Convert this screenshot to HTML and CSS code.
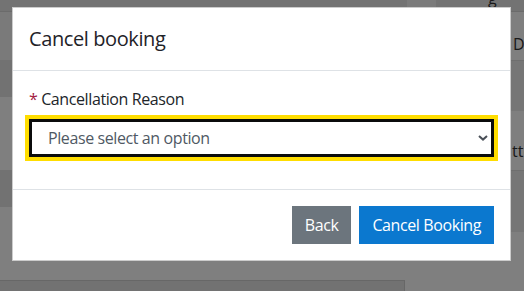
FILE: index.html
```html
<!DOCTYPE html>
<html lang="en">
<head>
    <meta charset="UTF-8">
    <meta name="viewport" content="width=device-width, initial-scale=1.0">
    <title>Cancel booking</title>
    <link rel="stylesheet" href="styles.css">
</head>
<body>
    <div class="page">
        <div class="page-left">
            <div class="row row-top"></div>
            <div class="row row-a"></div>
            <div class="row row-b"></div>
            <div class="row row-c"></div>
            <div class="row row-b"></div>
            <div class="row row-d"></div>
            <div class="bottom-panel"></div>
        </div>
        <div class="page-mid">
            <div class="row row-top cell-light"></div>
        </div>
        <div class="page-right">
            <div class="row row-top"><span class="tail">g</span></div>
            <div class="row row-e"><span class="cell-text">D</span></div>
            <div class="row row-f"></div>
            <div class="row row-g"><span class="cell-text">tte</span></div>
            <div class="row row-h"></div>
            <div class="row row-i"></div>
        </div>
    </div>

    <div class="backdrop"></div>

    <div class="modal">
        <div class="modal-header">
            <h5 class="modal-title">Cancel booking</h5>
        </div>
        <div class="modal-body">
            <div class="form-group">
                <label class="form-label" for="reason"><span class="required">*</span> Cancellation Reason</label>
                <div class="select-wrap">
                    <select class="form-control" id="reason">
                        <option>Please select an option</option>
                        <option>Change of plans</option>
                        <option>Booked by mistake</option>
                        <option>Other</option>
                    </select>
                    <svg class="chevron" width="10" height="6" viewBox="0 0 10 6">
                        <path d="M1 1 L5 4.6 L9 1" fill="none" stroke="#4a5058" stroke-width="2"/>
                    </svg>
                </div>
            </div>
        </div>
        <div class="modal-footer">
            <button class="btn btn-secondary">Back</button>
            <button class="btn btn-primary">Cancel Booking</button>
        </div>
    </div>
</body>
</html>
```

FILE: styles.css
```css
body {
    margin: 0;
    font-family: "Segoe UI", "Open Sans", "Noto Sans", sans-serif;
    font-size: 16px;
    line-height: 1.5;
    letter-spacing: -0.4px;
    color: #212529;
    overflow: hidden;
}

/* page behind the dialog */
.page {
    display: flex;
    height: 291px;
    background: #fff;
}
.page-left {
    width: 407px;
    display: flex;
    flex-direction: column;
}
.page-mid {
    width: 29px;
}
.page-right {
    flex: 1;
    display: flex;
    flex-direction: column;
}
.row {
    position: relative;
    overflow: hidden;
}
.row-top {
    height: 11px;
    background: #e6e6e6;
    border-bottom: 1px solid #d6d6d6;
}
.cell-light {
    background: #f6f6f6;
}
.row-a { height: 48px; background: #f4f4f4; }
.row-b { height: 37px; background: #e4e4e4; }
.row-c { height: 73px; background: #fff; }
.row-d { height: 73px; background: #fff; }
.bottom-panel {
    margin-top: auto;
    height: 10px;
    margin-right: 2px;
    background: #e4e4e4;
    border-top: 1px solid #cfcfcf;
    border-right: 1px solid #cfcfcf;
}
.row-e { height: 48px; background: #fff; border-bottom: 1px solid #ddd; }
.row-f { height: 50px; background: #ececec; }
.row-g { height: 59px; background: #fff; border-bottom: 1px solid #ddd; }
.row-h { height: 61px; background: #ececec; }
.row-i { flex: 1; background: #fff; }
.cell-text {
    position: absolute;
    left: 77px;
    font-size: 16px;
    letter-spacing: 0;
    color: #333;
}
.row-e .cell-text { top: 20px; }
.row-g .cell-text { top: 28px; left: 76px; }
.tail {
    position: absolute;
    left: 52px;
    top: -14px;
    color: #333;
}

.backdrop {
    position: fixed;
    inset: 0;
    background: rgba(0, 0, 0, 0.5);
}

/* dialog */
.modal {
    position: fixed;
    left: 12px;
    top: 7px;
    width: 499px;
    box-sizing: border-box;
    background: #fff;
    border: 1px solid rgba(0, 0, 0, 0.2);
    display: flex;
    flex-direction: column;
}
.modal-header {
    padding: 16px;
    border-bottom: 1px solid #dee2e6;
}
.modal-title {
    margin: 0;
    font-size: 20px;
    font-weight: 400;
    line-height: 30px;
    color: #1f2328;
}
.modal-body {
    padding: 16px;
}
.form-group {
    margin-bottom: 16px;
}
.form-label {
    display: block;
    margin-bottom: 8px;
    line-height: 24px;
    color: #212529;
}
.required {
    color: #a3203f;
}
.select-wrap {
    position: relative;
}
.form-control {
    display: block;
    width: 100%;
    height: 38px;
    box-sizing: border-box;
    padding: 4px 30px 4px 16px;
    font-family: inherit;
    font-size: 16px;
    letter-spacing: -0.4px;
    color: #4f5964;
    background: #fff;
    border: 3px solid #0b0c0c;
    border-radius: 0;
    outline: 4px solid #ffdd00;
    -webkit-appearance: none;
    appearance: none;
}
.chevron {
    position: absolute;
    right: 6px;
    top: 16px;
    pointer-events: none;
}
.modal-footer {
    display: flex;
    justify-content: flex-end;
    padding: 12px;
    border-top: 1px solid #dee2e6;
}
.btn {
    margin: 4px;
    padding: 6px 12px;
    font-family: inherit;
    font-size: 16px;
    line-height: 24px;
    letter-spacing: -0.4px;
    color: #fff;
    border: 1px solid transparent;
    border-radius: 0;
    cursor: pointer;
}
.btn-secondary {
    background-color: #6c757d;
}
.btn-primary {
    background-color: #0b78cf;
}
```
